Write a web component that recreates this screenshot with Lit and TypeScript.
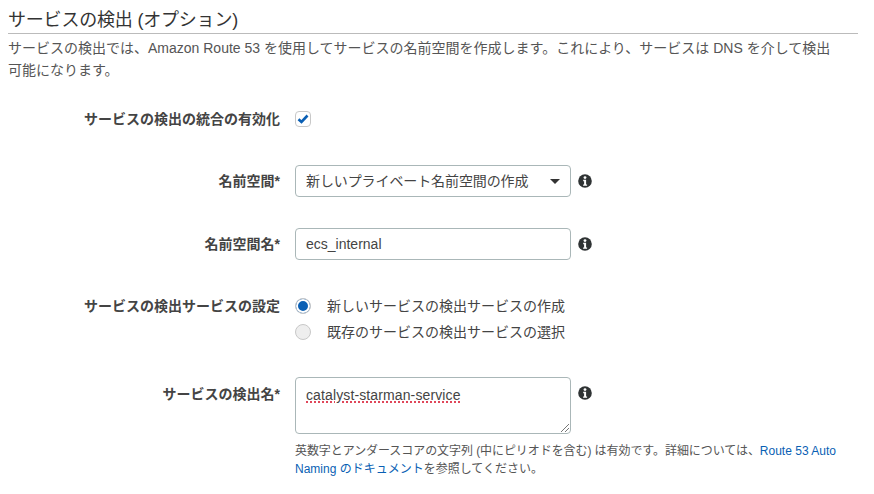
import { css, html, LitElement } from 'lit';
import { customElement } from 'lit/decorators.js';

const infoIcon = html`<svg class="info" viewBox="0 0 14 14" width="14" height="14">
  <circle cx="7" cy="7" r="6.8" fill="#2f3334"></circle>
  <circle cx="7" cy="3.600" r="1.400" fill="#fff"></circle>
  <path d="M5.200 5.800h2.900v4.600h1v1.400H5.100v-1.400h1V7.200H5.200z" fill="#fff"></path>
</svg>`;

@customElement('app-root')
export class AppRoot extends LitElement {
  static styles = css`
    :host {
      display: block;
      width: 874px;
      height: 494px;
      overflow: hidden;
      box-sizing: border-box;
      padding: 8px 16px 0 8px;
      background: #fff;
      color: #444;
      font-family: 'Liberation Sans', 'Noto Sans CJK JP', sans-serif;
      font-size: 14px;
      line-height: 20px;
    }
    h2 {
      margin: 0;
      height: 25px;
      font-size: 18px;
      font-weight: 400;
      line-height: 25px;
      letter-spacing: -0.2px;
      color: #333;
      border-bottom: 1px solid #bbb;
    }
    .desc {
      margin: 3px 20px 0 0;
      line-height: 22px;
      color: #555;
    }
    .form {
      display: grid;
      grid-template-columns: 287px 276px 1fr;
      margin-top: 23px;
    }
    .label {
      padding-right: 15px;
      text-align: right;
      font-weight: 700;
      color: #444;
    }
    .tall {
      line-height: 32px;
    }
    .name-label {
      line-height: 34px;
    }
    .check-row {
      display: flex;
      align-items: center;
      height: 30px;
    }
    .check-row.label {
      justify-content: flex-end;
    }
    .box {
      display: flex;
      align-items: center;
      justify-content: center;
      box-sizing: border-box;
      width: 16px;
      height: 16px;
      border: 1px solid #c8c8c8;
      border-radius: 4px;
    }
    .field {
      box-sizing: border-box;
      width: 276px;
      height: 32px;
      padding: 0 10px;
      border: 1px solid #aab7b8;
      border-radius: 4px;
      line-height: 30px;
      color: #444;
    }
    .select {
      display: flex;
      justify-content: space-between;
      align-items: center;
      padding-right: 10px;
      letter-spacing: -0.1px;
    }
    .caret {
      width: 0;
      height: 0;
      border-left: 5px solid transparent;
      border-right: 5px solid transparent;
      border-top: 5px solid #333;
    }
    .area {
      position: relative;
      height: 57px;
      padding-top: 5px;
      line-height: 24px;
    }
    .spell {
      letter-spacing: 0.12px;
      text-decoration: underline dotted #e0475a 2px;
      text-underline-offset: 1px;
    }
    .grip {
      position: absolute;
      right: 1px;
      bottom: 1px;
    }
    .info {
      display: block;
      margin: 9px 0 0 7px;
    }
    .radios {
      display: flex;
      flex-direction: column;
      gap: 6px;
    }
    .radio {
      display: flex;
      align-items: center;
      gap: 16px;
      height: 20px;
    }
    .dot {
      box-sizing: border-box;
      width: 16px;
      height: 16px;
      border-radius: 50%;
      border: 1px solid #c8c8c8;
      background: #eee;
    }
    .dot.on {
      background: #0a5fb4;
      box-shadow: inset 0 0 0 2px #fff;
    }
    .help {
      grid-column: 2 / 4;
      margin-top: 8px;
      font-size: 12px;
      line-height: 18px;
      color: #555;
    }
    .help-lead {
      letter-spacing: -0.07px;
    }
    a {
      color: #0a5fb4;
      text-decoration: none;
    }
    .gap {
      grid-column: 1 / -1;
      height: 31px;
    }
    .gap.wide {
      height: 36px;
    }
    .gap.mid {
      height: 35px;
    }
  `;

  override render() {
    return html`
      <h2>サービスの検出 (オプション)</h2>
      <p class="desc">サービスの検出では、Amazon Route 53 を使用してサービスの名前空間を作成します。これにより、サービスは DNS を介して検出可能になります。</p>
      <div class="form">
        <div class="label check-row">サービスの検出の統合の有効化</div>
        <div class="check-row">
          <span class="box">
            <svg viewBox="0 0 12 10" width="12" height="10"><path d="M1.500 5.200 4.500 8 10.500 1.500" fill="none" stroke="#0a5fb4" stroke-width="2.600"></path></svg>
          </span>
        </div>
        <div></div>
        <div class="gap"></div>

        <div class="label tall">名前空間*</div>
        <div class="field select"><span>新しいプライベート名前空間の作成</span><span class="caret"></span></div>
        ${infoIcon}
        <div class="gap"></div>

        <div class="label tall">名前空間名*</div>
        <div class="field">ecs_internal</div>
        ${infoIcon}
        <div class="gap wide"></div>

        <div class="label">サービスの検出サービスの設定</div>
        <div class="radios">
          <label class="radio"><span class="dot on"></span>新しいサービスの検出サービスの作成</label>
          <label class="radio"><span class="dot"></span>既存のサービスの検出サービスの選択</label>
        </div>
        <div></div>
        <div class="gap mid"></div>

        <div class="label name-label">サービスの検出名*</div>
        <div class="field area">
          <span class="spell">catalyst-starman-service</span>
          <svg class="grip" viewBox="0 0 8 8" width="8" height="8"><path d="M0 8 8 0M4 8 8 4" stroke="#777" stroke-width="1"></path></svg>
        </div>
        ${infoIcon}
        <div></div>
        <div class="help"><span class="help-lead">英数字とアンダースコアの文字列 (中にピリオドを含む) は有効です。詳細については、</span><a href="#">Route 53 Auto</a> <a href="#">Naming のドキュメント</a>を参照してください。</div>
      </div>
    `;
  }
}
